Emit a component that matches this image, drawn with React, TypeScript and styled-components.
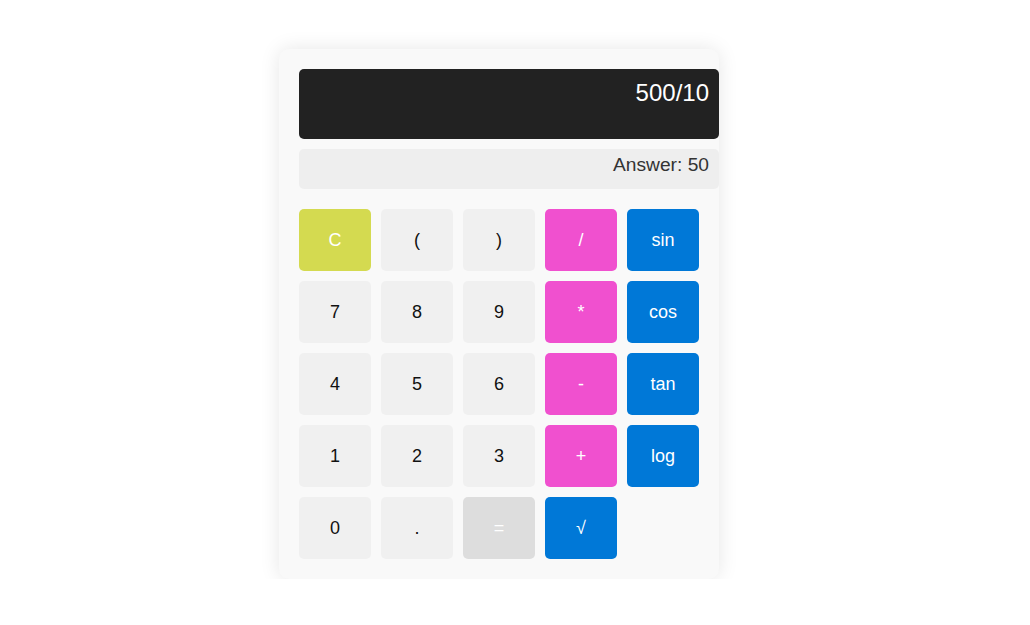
import React from "react";
import styled, { createGlobalStyle } from "styled-components";

const Global = createGlobalStyle`
  html, body { margin: 0; padding: 0; background: #ffffff; }
  body { font-family: "Liberation Sans", Arial, sans-serif; }
`;

const Page = styled.div`
  display: flex;
  justify-content: center;
  padding: 49px 32px 0 0;
`;

const Card = styled.div`
  width: 400px;
  padding: 20px;
  background: #f9f9f9;
  border-radius: 10px;
  box-shadow: 0 0 20px rgba(0, 0, 0, 0.1);
`;

const Display = styled.div`
  width: 100%;
  min-height: 50px;
  padding: 10px;
  background: #222222;
  color: #ffffff;
  font-size: 24px;
  text-align: right;
  border-radius: 5px;
`;

const Answer = styled.div`
  width: 100%;
  height: 30px;
  margin-top: 10px;
  padding: 5px 10px;
  background: #eeeeee;
  color: #333333;
  font-size: 19.2px;
  text-align: right;
  border-radius: 5px;
`;

const Grid = styled.div`
  display: grid;
  grid-template-columns: repeat(5, 72px);
  grid-auto-rows: 62px;
  gap: 10px;
  margin-top: 20px;
`;

type Kind = "num" | "clear" | "op" | "fn" | "eq";

const colors: Record<Kind, { bg: string; fg: string }> = {
  num: { bg: "#f0f0f0", fg: "#111111" },
  clear: { bg: "#d4da50", fg: "#ffffff" },
  op: { bg: "#f050cf", fg: "#ffffff" },
  fn: { bg: "#0078d7", fg: "#ffffff" },
  eq: { bg: "#dddddd", fg: "#ffffff" },
};

const Key = styled.button<{ $kind: Kind }>`
  border: none;
  border-radius: 5px;
  font-family: "Liberation Sans", Arial, sans-serif;
  font-size: 18px;
  background: ${(p) => colors[p.$kind].bg};
  color: ${(p) => colors[p.$kind].fg};
  display: flex;
  align-items: center;
  justify-content: center;
  padding: 0;
  cursor: pointer;
`;

const keys: [string, Kind][] = [
  ["C", "clear"], ["(", "num"], [")", "num"], ["/", "op"], ["sin", "fn"],
  ["7", "num"], ["8", "num"], ["9", "num"], ["*", "op"], ["cos", "fn"],
  ["4", "num"], ["5", "num"], ["6", "num"], ["-", "op"], ["tan", "fn"],
  ["1", "num"], ["2", "num"], ["3", "num"], ["+", "op"], ["log", "fn"],
  ["0", "num"], [".", "num"], ["=", "eq"], ["√", "fn"],
];

export default function App() {
  return (
    <>
      <Global />
      <Page>
        <Card>
          <Display>500/10</Display>
          <Answer>Answer: 50</Answer>
          <Grid>
            {keys.map(([label, kind]) => (
              <Key key={label} $kind={kind}>
                {label}
              </Key>
            ))}
          </Grid>
        </Card>
      </Page>
    </>
  );
}
